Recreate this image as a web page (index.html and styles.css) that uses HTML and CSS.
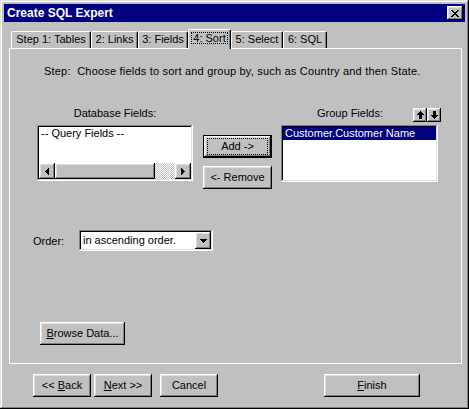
FILE: index.html
```html
<!DOCTYPE html>
<html>
<head>
<meta charset="utf-8">
<title>Create SQL Expert</title>
<link rel="stylesheet" href="styles.css">
</head>
<body>
<div class="window">
  <div class="titlebar">
    <span class="title">Create SQL Expert</span>
    <button class="btn close" type="button" aria-label="Close">
      <svg width="8" height="7" viewBox="0 0 8 7" shape-rendering="crispEdges"><path d="M0 0h2v1h-2z M6 0h2v1h-2z M1 1h2v1h-2z M5 1h2v1h-2z M2 2h4v1h-4z M3 3h2v1h-2z M2 4h4v1h-4z M1 5h2v1h-2z M5 5h2v1h-2z M0 6h2v1h-2z M6 6h2v1h-2z" fill="#000"/></svg>
    </button>
  </div>

  <div class="tabs">
    <div class="tab t1">Step 1: Tables</div>
    <div class="tab t2">2: Links</div>
    <div class="tab t3">3: Fields</div>
    <div class="tab t4 active"><span class="tab-focus">4: Sort</span></div>
    <div class="tab t5">5: Select</div>
    <div class="tab t6">6: SQL</div>
  </div>

  <div class="panel">
    <p class="step">Step:  Choose fields to sort and group by, such as Country and then State.</p>

    <div class="lists">
      <div class="col-db">
        <div class="label-c">Database Fields:</div>
        <div class="field listbox db">
          <div class="items"><div class="item">-- Query Fields --</div></div>
          <div class="hscroll">
            <div class="btn sbtn"><svg width="4" height="7" viewBox="0 0 4 7" shape-rendering="crispEdges"><path d="M0 3h1v-1h1v-1h1v-1h1v7h-1v-1h-1v-1h-1v-1h-1z" fill="#000"/></svg></div>
            <div class="btn thumb"></div>
            <div class="track"></div>
            <div class="btn sbtn"><svg width="4" height="7" viewBox="0 0 4 7" shape-rendering="crispEdges"><path d="M4 3h-1v-1h-1v-1h-1v-1h-1v7h1v-1h1v-1h1v-1h1z" fill="#000"/></svg></div>
          </div>
        </div>
      </div>

      <div class="col-btns">
        <button class="btn default" type="button"><span class="focus">Add -&gt;</span></button>
        <button class="btn" type="button">&lt;- Remove</button>
      </div>

      <div class="col-grp">
        <div class="grp-head">
          <span>Group Fields:</span>
          <div class="arrows">
            <div class="btn arrow"><svg width="7" height="8" viewBox="0 0 7 8" shape-rendering="crispEdges"><path d="M3 0h1v1h1v1h1v1h1v1h-2v4h-3v-4h-2v-1h1v-1h1v-1h1z" fill="#000"/></svg></div>
            <div class="btn arrow"><svg width="7" height="8" viewBox="0 0 7 8" shape-rendering="crispEdges"><path d="M3 8h1v-1h1v-1h1v-1h1v-1h-2v-4h-3v4h-2v1h1v1h1v1h1z" fill="#000"/></svg></div>
          </div>
        </div>
        <div class="field listbox grp"><div class="item sel">Customer.Customer Name</div></div>
      </div>
    </div>

    <div class="order">
      <span class="order-label">Order:</span>
      <div class="field combo">
        <span class="combo-text">in ascending order.</span>
        <div class="btn drop"><svg width="7" height="4" viewBox="0 0 7 4" shape-rendering="crispEdges"><path d="M0 0h7v1h-1v1h-1v1h-1v1h-1v-1h-1v-1h-1v-1h-1z" fill="#000"/></svg></div>
      </div>
    </div>

    <button class="btn browse" type="button"><span><u>B</u>rowse Data...</span></button>
  </div>

  <div class="footer">
    <button class="btn fbtn" type="button"><span>&lt;&lt; <u>B</u>ack</span></button>
    <button class="btn fbtn next" type="button"><span><u>N</u>ext &gt;&gt;</span></button>
    <button class="btn fbtn cancel" type="button">Cancel</button>
    <button class="btn fbtn finish" type="button"><span><u>F</u>inish</span></button>
  </div>
</div>
</body>
</html>
```

FILE: styles.css
```css
* { box-sizing: border-box; }

html, body { margin: 0; }

body {
  background: #c0c0c0;
  font: 11px/13px "Liberation Sans", Arial, sans-serif;
  color: #000;
}

.window {
  width: 469px;
  height: 409px;
  padding: 4px;
  background: #c0c0c0;
  box-shadow: inset -1px -1px #000, inset 1px 1px #dfdfdf,
              inset -2px -2px #808080, inset 2px 2px #fff;
}

.titlebar {
  height: 18px;
  background: #000080;
  color: #fff;
  display: flex;
  align-items: center;
  justify-content: space-between;
  padding: 0 2px 0 3px;
}

.title {
  font-weight: bold;
  font-size: 12px;
}

.btn {
  background: #c0c0c0;
  border: 0;
  padding: 0;
  margin: 0;
  font: inherit;
  color: #000;
  display: flex;
  align-items: center;
  justify-content: center;
  box-shadow: inset -1px -1px #000, inset 1px 1px #fff,
              inset -2px -2px #808080, inset 2px 2px #dfdfdf;
}

.close { width: 16px; height: 14px; }

/* tabs */
.tabs {
  display: flex;
  align-items: flex-end;
  height: 19px;
  margin: 7px 0 0 7px;
}

.tab {
  height: 17px;
  border: 1px solid;
  border-color: #fff #000 transparent #fff;
  border-bottom: 0;
  border-radius: 2px 2px 0 0;
  box-shadow: inset -1px 0 #808080;
  padding-top: 1px;
  text-align: center;
  white-space: nowrap;
}

.t1 { width: 80px; }
.t2 { width: 47px; }
.t3 { width: 50px; }
.t4 { width: 43px; }
.t5 { width: 52px; }
.t6 { width: 44px; }

.tab.active {
  height: 20px;
  margin-bottom: -1px;
  background: #c0c0c0;
  position: relative;
  z-index: 1;
  padding-top: 2px;
}

.tab-focus {
  display: inline-block;
  border: 1px dotted #000;
  line-height: 10px;
  padding: 0 1px;
}

/* panel */
.panel {
  width: 453px;
  height: 316px;
  margin-left: 5px;
  border: 1px solid #fff;
}

.step {
  margin: 16px 0 0 34px;
  white-space: pre;
  letter-spacing: 0.2px;
}

.lists {
  display: flex;
  align-items: flex-start;
  margin-top: 29px;
}

.col-db {
  margin-left: 27px;
  width: 156px;
}

.label-c {
  text-align: center;
  margin-bottom: 5px;
}

.field {
  background: #fff;
  padding: 2px;
  box-shadow: inset -1px -1px #fff, inset 1px 1px #808080,
              inset -2px -2px #dfdfdf, inset 2px 2px #000;
}

.listbox.db {
  height: 56px;
  display: flex;
  flex-direction: column;
}

.items { flex: 1; }

.item {
  height: 13px;
  padding-left: 2px;
  white-space: nowrap;
}

.item.sel {
  background: #000080;
  color: #fff;
}

.hscroll {
  display: flex;
  height: 16px;
}

.sbtn { width: 16px; height: 16px; }

.thumb { width: 100px; height: 16px; }

.track {
  flex: 1;
  background: repeating-conic-gradient(#c0c0c0 0 25%, #fff 0 50%) 0 0 / 2px 2px;
}

.col-btns {
  margin-left: 10px;
  width: 69px;
  padding-top: 28px;
  display: flex;
  flex-direction: column;
  gap: 8px;
}

.col-btns .btn { height: 23px; width: 69px; }

.btn.default {
  padding: 3px 4px;
  box-shadow: inset 0 0 0 1px #000, inset -2px -2px #000, inset 2px 2px #fff,
              inset -3px -3px #808080, inset 3px 3px #dfdfdf;
}

.focus {
  flex: 1;
  align-self: stretch;
  display: flex;
  align-items: center;
  justify-content: center;
  border: 1px dotted #000;
}

.col-grp {
  margin-left: 9px;
  width: 160px;
}

.grp-head {
  display: flex;
  height: 18px;
  padding-left: 36px;
}

.arrows {
  margin-left: auto;
  margin-top: 1px;
  display: flex;
}

.arrow { width: 14px; height: 14px; }

.listbox.grp {
  width: 157px;
  height: 57px;
}

/* order */
.order {
  display: flex;
  align-items: center;
  margin: 41px 0 0 23px;
}

.order-label { width: 46px; padding-top: 1px; }

.combo {
  width: 134px;
  height: 21px;
  display: flex;
}

.combo-text {
  flex: 1;
  padding-left: 2px;
  line-height: 17px;
}

.drop { width: 16px; height: 17px; }

.browse {
  width: 85px;
  height: 23px;
  margin: 71px 0 0 30px;
}

/* footer */
.footer {
  display: flex;
  margin-top: 10px;
  padding-left: 29px;
}

.fbtn { width: 58px; height: 23px; }
.next { margin-left: 3px; }
.cancel { margin-left: 8px; }
.finish { margin-left: 106px; width: 96px; }
```
